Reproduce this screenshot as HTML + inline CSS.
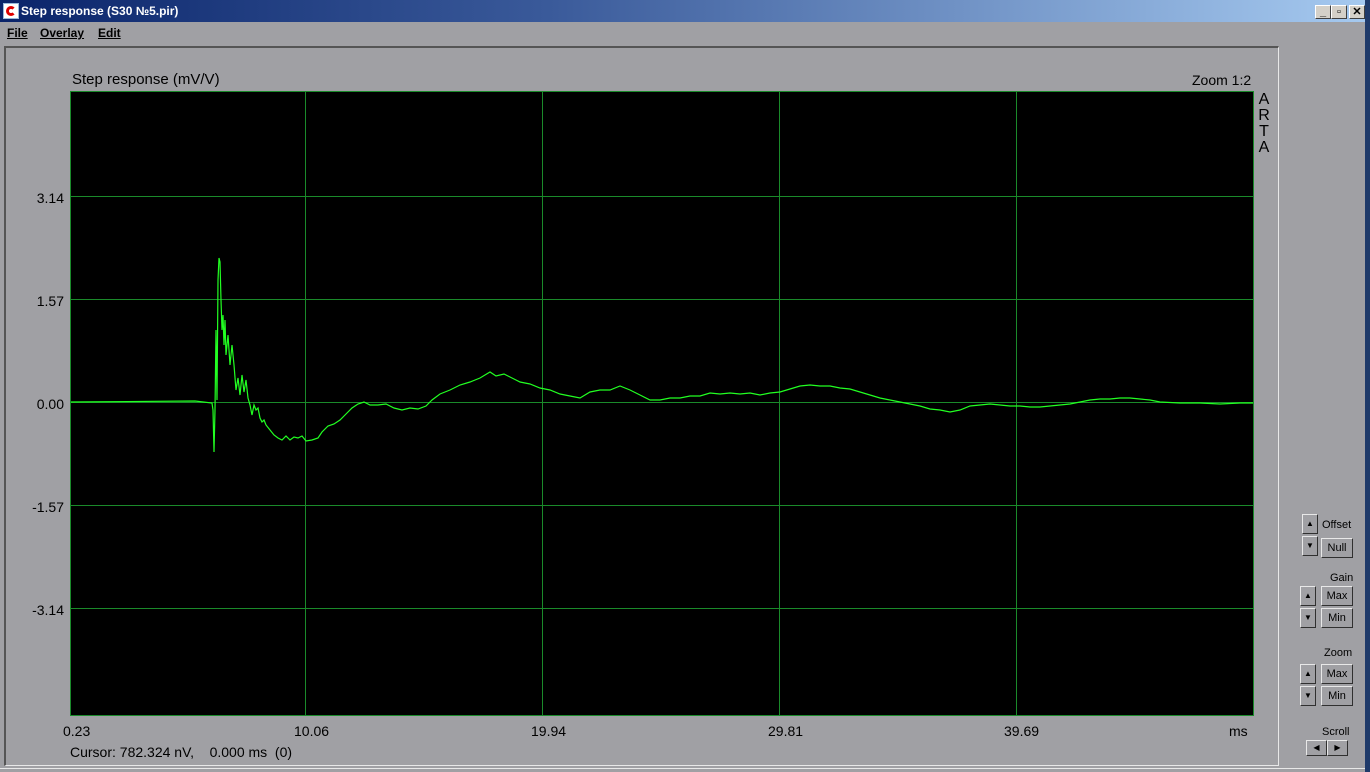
<!DOCTYPE html>
<html><head><meta charset="utf-8"><style>
*{margin:0;padding:0;box-sizing:border-box}
body{width:1370px;height:772px;background:#a0a0a4;position:relative;overflow:hidden;font-family:"Liberation Sans",sans-serif;color:#000}
.abs{position:absolute}
#title{left:0;top:0;width:1370px;height:22px;background:linear-gradient(90deg,#0a246a 0%,#3a5a9a 40%,#a6caf0 100%);}
#title span{position:absolute;left:21px;top:4px;color:#fff;font:bold 12px "Liberation Sans",sans-serif}
.wb{position:absolute;top:5px;width:16px;height:14px;background:#d4d0c8;border:1px solid;border-color:#fff #404040 #404040 #fff;font:bold 11px sans-serif;text-align:center;line-height:12px}
#menu{left:0;top:22px;height:22px;font:bold 12px "Liberation Sans",sans-serif}
#menu span{position:absolute;top:4px;text-decoration:underline;text-decoration-thickness:1px}
#panel{left:4px;top:46px;width:1275px;height:720px;border-left:2px solid #555;border-top:2px solid #555;border-right:1px solid #e8e8e8;border-bottom:1px solid #e8e8e8}
#plot{left:70px;top:91px;width:1184px;height:625px;background:#000;border:1px solid #1a8a2a}
.t{position:absolute;font-size:14px;color:#000}
.yl{position:absolute;right:1306px;font-size:14px}
.btn{position:absolute;background:#a0a0a4;border:1px solid;border-color:#e8e8e8 #303030 #303030 #e8e8e8;font-size:11px;text-align:center;color:#000}
.lab{position:absolute;font-size:11px}
</style></head><body>
<div id="title" class="abs">
<div class="abs" style="left:3px;top:3px;width:16px;height:16px;background:#fff;border:1px solid #9bd"><div style="margin:2px;width:10px;height:10px;border:3px solid #d00;border-right-color:transparent;border-radius:50%"></div></div>
<span>Step response (S30 №5.pir)</span>
<div class="wb" style="left:1315px">_</div><div class="wb" style="left:1331px">▫</div><div class="wb" style="left:1349px">✕</div>
</div>
<div class="abs" style="left:1365px;top:0;width:5px;height:772px;background:#1f3a6a"></div>
<div id="menu" class="abs"><span style="left:7px">File</span><span style="left:40px">Overlay</span><span style="left:98px">Edit</span></div>
<div id="panel" class="abs"></div>
<div class="t" style="left:72px;top:71px;font-size:15px">Step response (mV/V)</div>
<div class="t" style="left:1192px;top:72px">Zoom 1:2</div>
<div class="t" style="left:1258px;top:92px;font-size:16px;line-height:16px;width:12px;text-align:center">A<br>R<br>T<br>A</div>
<div id="plot" class="abs"></div>
<svg class="abs" style="left:0;top:0" width="1370" height="772">
<g stroke="#1a8a2a" stroke-width="1" shape-rendering="crispEdges">
<line x1="305.5" y1="92" x2="305.5" y2="715"/><line x1="542.5" y1="92" x2="542.5" y2="715"/><line x1="779.5" y1="92" x2="779.5" y2="715"/><line x1="1016.5" y1="92" x2="1016.5" y2="715"/>
<line x1="71" y1="196.5" x2="1253" y2="196.5"/><line x1="71" y1="299.5" x2="1253" y2="299.5"/><line x1="71" y1="402.5" x2="1253" y2="402.5"/><line x1="71" y1="505.5" x2="1253" y2="505.5"/><line x1="71" y1="608.5" x2="1253" y2="608.5"/>
</g>
<polyline fill="none" stroke="#22ff22" stroke-width="1.2" points="71,402 195,401 212,403 213,410 214,452 215,410 216,330 217,400 218,280 219,258 220,262 221,300 222,330 223,315 224,345 225,320 226,355 228,335 230,365 232,345 234,365 236,390 238,378 240,395 242,375 244,392 246,380 248,398 250,405 252,415 254,405 256,410 258,408 260,418 262,422 264,420 266,425 270,430 274,435 278,438 282,440 286,436 290,440 294,437 298,438 302,436 306,441 312,440 318,438 322,432 328,426 334,424 340,420 346,414 352,408 358,404 364,402 370,405 378,405 386,404 394,408 402,410 410,408 418,409 426,406 432,400 440,394 450,390 460,385 470,382 480,378 490,372 496,376 504,374 512,378 520,382 530,384 540,388 550,390 560,394 570,396 580,398 590,392 600,390 610,390 620,386 630,390 640,395 650,400 660,400 670,398 680,398 690,396 700,396 710,393 720,394 730,393 740,394 750,393 760,395 770,393 780,392 790,389 800,386 810,385 820,386 830,386 840,388 850,389 860,392 870,395 880,398 890,400 900,402 910,404 920,406 930,409 940,410 950,412 960,410 970,406 980,405 990,404 1000,405 1010,406 1020,406 1030,407 1040,407 1050,406 1060,405 1070,404 1080,402 1090,400 1100,399 1110,399 1120,398 1130,398 1140,399 1150,400 1160,402 1180,403 1200,403 1220,404 1240,403 1253,403"/>
</svg>
<div class="yl" style="top:190px">3.14</div>
<div class="yl" style="top:293px">1.57</div>
<div class="yl" style="top:396px">0.00</div>
<div class="yl" style="top:499px">-1.57</div>
<div class="yl" style="top:602px">-3.14</div>
<div class="t" style="left:63px;top:723px">0.23</div>
<div class="t" style="left:294px;top:723px">10.06</div>
<div class="t" style="left:531px;top:723px">19.94</div>
<div class="t" style="left:768px;top:723px">29.81</div>
<div class="t" style="left:1004px;top:723px">39.69</div>
<div class="t" style="left:1229px;top:723px">ms</div>
<div class="t" style="left:70px;top:744px">Cursor: 782.324 nV,&nbsp;&nbsp;&nbsp; 0.000 ms&nbsp; (0)</div>
<div class="btn" style="left:1302px;top:514px;width:16px;height:20px;line-height:18px;font-size:8px">▲</div>
<div class="btn" style="left:1302px;top:536px;width:16px;height:20px;line-height:18px;font-size:8px">▼</div>
<div class="lab" style="left:1322px;top:519px">Offset</div>
<div class="btn" style="left:1321px;top:538px;width:32px;height:20px;line-height:18px">Null</div>
<div class="lab" style="left:1330px;top:572px">Gain</div>
<div class="btn" style="left:1300px;top:586px;width:16px;height:20px;line-height:18px;font-size:8px">▲</div>
<div class="btn" style="left:1300px;top:608px;width:16px;height:20px;line-height:18px;font-size:8px">▼</div>
<div class="btn" style="left:1321px;top:586px;width:32px;height:20px;line-height:18px">Max</div>
<div class="btn" style="left:1321px;top:608px;width:32px;height:20px;line-height:18px">Min</div>
<div class="lab" style="left:1324px;top:647px">Zoom</div>
<div class="btn" style="left:1300px;top:664px;width:16px;height:20px;line-height:18px;font-size:8px">▲</div>
<div class="btn" style="left:1300px;top:686px;width:16px;height:20px;line-height:18px;font-size:8px">▼</div>
<div class="btn" style="left:1321px;top:664px;width:32px;height:20px;line-height:18px">Max</div>
<div class="btn" style="left:1321px;top:686px;width:32px;height:20px;line-height:18px">Min</div>
<div class="lab" style="left:1322px;top:726px">Scroll</div>
<div class="btn" style="left:1306px;top:740px;width:21px;height:16px;line-height:14px;font-size:8px">◀</div>
<div class="btn" style="left:1327px;top:740px;width:21px;height:16px;line-height:14px;font-size:8px">▶</div>
<div class="abs" style="left:0;top:768px;width:1365px;height:1px;background:#e8e8e8"></div>
</body></html>
